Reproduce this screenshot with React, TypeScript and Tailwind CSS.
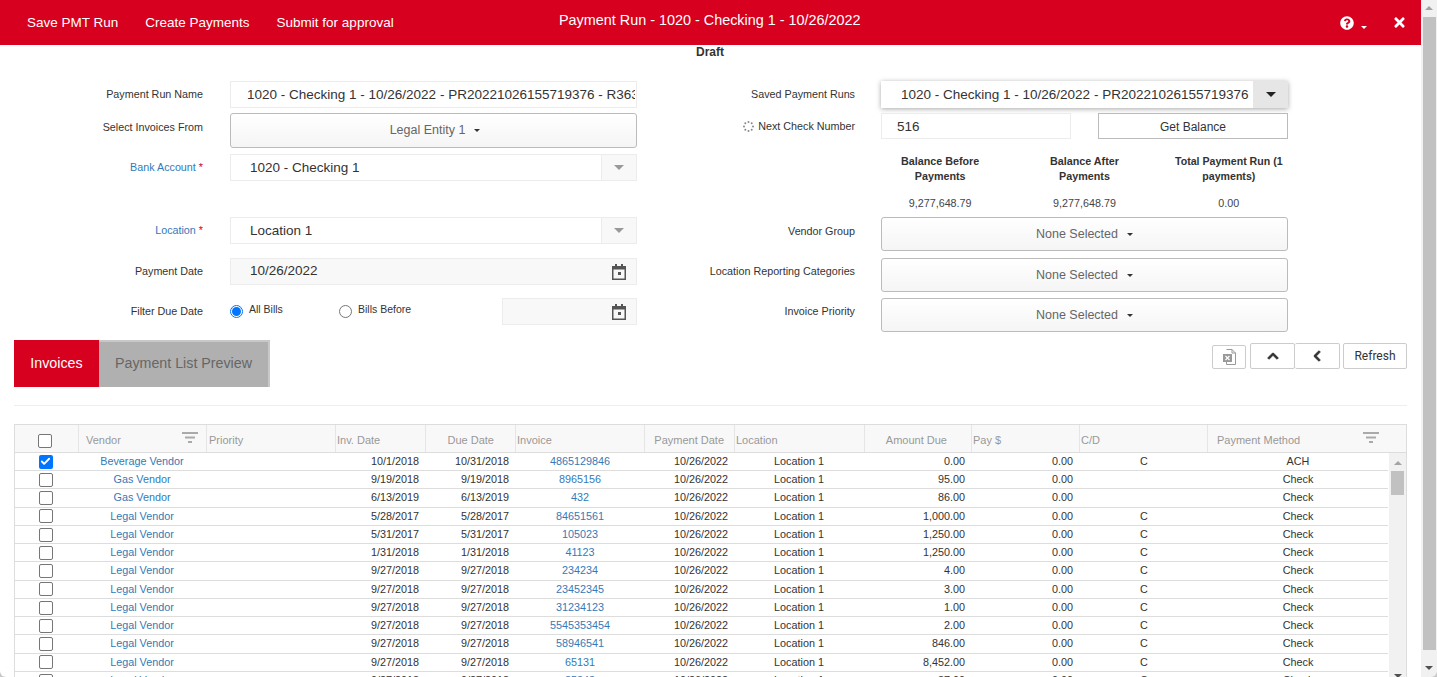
import React from 'react';
import { Check } from 'lucide-react';
import { FaChevronUp, FaChevronLeft, FaTimes, FaQuestionCircle } from 'react-icons/fa';

const rows = [
  ['Beverage Vendor', '10/1/2018', '10/31/2018', '4865129846', '0.00', 'C', 'ACH', true],
  ['Gas Vendor', '9/19/2018', '9/19/2018', '8965156', '95.00', '', 'Check'],
  ['Gas Vendor', '6/13/2019', '6/13/2019', '432', '86.00', '', 'Check'],
  ['Legal Vendor', '5/28/2017', '5/28/2017', '84651561', '1,000.00', 'C', 'Check'],
  ['Legal Vendor', '5/31/2017', '5/31/2017', '105023', '1,250.00', 'C', 'Check'],
  ['Legal Vendor', '1/31/2018', '1/31/2018', '41123', '1,250.00', 'C', 'Check'],
  ['Legal Vendor', '9/27/2018', '9/27/2018', '234234', '4.00', 'C', 'Check'],
  ['Legal Vendor', '9/27/2018', '9/27/2018', '23452345', '3.00', 'C', 'Check'],
  ['Legal Vendor', '9/27/2018', '9/27/2018', '31234123', '1.00', 'C', 'Check'],
  ['Legal Vendor', '9/27/2018', '9/27/2018', '5545353454', '2.00', 'C', 'Check'],
  ['Legal Vendor', '9/27/2018', '9/27/2018', '58946541', '846.00', 'C', 'Check'],
  ['Legal Vendor', '9/27/2018', '9/27/2018', '65131', '8,452.00', 'C', 'Check'],
  ['Legal Vendor', '9/27/2018', '9/27/2018', '85343', '87.00', 'C', 'Check'],
] as const;

const gridCols = 'grid grid-cols-[64px_128px_129px_90px_90px_129px_90px_130px_107px_108px_128px_181px]';

const Caret = ({ className = 'border-t-[#555]' }: { className?: string }) => (
  <span className={`inline-block w-0 h-0 border-x-[3px] border-x-transparent border-t-[3px] ${className}`} />
);

const BigCaret = () => (
  <span className="inline-block w-0 h-0 border-x-[5px] border-x-transparent border-t-[5px] border-t-[#999]" />
);

const FilterIcon = () => (
  <svg width="16" height="11" viewBox="0 0 16 11" fill="#aaa">
    <rect x="0" y="0" width="16" height="2" />
    <rect x="3" y="4.5" width="10" height="2" />
    <rect x="6" y="9" width="4" height="2" />
  </svg>
);

const CalIcon = () => (
  <svg width="14" height="16" viewBox="0 0 14 16" fill="#555">
    <path d="M3 0h2v2h4V0h2v2h3v14H0V2h3V0zM1.5 5.5v9h11v-9h-11zM6 8h3v3H6V8z" fillRule="evenodd" />
  </svg>
);

const ExcelIcon = () => (
  <svg width="13" height="16" viewBox="0 0 13 16">
    <path d="M3.5 0.5h5.5l3.5 3.5v11.5h-9v-3" fill="none" stroke="#999" />
    <path d="M9 0.5v3.5h3.5" fill="none" stroke="#999" />
    <rect x="0" y="5" width="9" height="8" fill="#999" />
    <path d="M2.5 7l4 4M6.5 7l-4 4" stroke="#fff" strokeWidth="1.2" />
  </svg>
);

const Label = ({ children, blue }: { children: React.ReactNode; blue?: boolean }) => (
  <div className={`text-right text-[10.75px] ${blue ? 'text-[#337ab7]' : 'text-[#333]'}`}>{children}</div>
);

const Combo = ({ value }: { value: string }) => (
  <div className="flex h-[27px] border border-[#ececec] bg-white">
    <div className="flex-1 pl-[19px] text-[13.5px] leading-[26px] text-[#333]">{value}</div>
    <div className="w-[35px] border-l border-[#ececec] bg-[#f8f8f8] flex items-center justify-center"><BigCaret /></div>
  </div>
);

const MultiSelect = ({ text, className }: { text: string; className: string }) => (
  <div className={`flex items-center justify-center gap-[9px] rounded-[3px] border border-[#bbb] bg-gradient-to-b from-white to-[#f5f5f5] text-[12.5px] text-[#666] ${className}`}>
    {text} <Caret className="border-t-[#333]" />
  </div>
);

const DateBox = ({ value, className }: { value?: string; className: string }) => (
  <div className={`flex h-[27px] items-center justify-between border border-[#ececec] bg-[#f8f8f8] pl-[19px] pr-[10px] text-[13.5px] text-[#333] ${className}`}>
    <span>{value}</span>
    <CalIcon />
  </div>
);

const Radio = ({ checked, label, className }: { checked?: boolean; label: string; className: string }) => (
  <div className={`flex items-center gap-[6px] ${className}`}>
    <span className={`flex h-[13px] w-[13px] items-center justify-center rounded-full border bg-white ${checked ? 'border-[#0075ff]' : 'border-[#767676]'}`}>
      {checked && <span className="h-[9px] w-[9px] rounded-full bg-[#0075ff]" />}
    </span>
    <span className="relative top-[-2px] text-[10.5px] text-[#333]">{label}</span>
  </div>
);

const Box = ({ checked }: { checked?: boolean }) =>
  checked ? (
    <span className="flex h-[14px] w-[14px] items-center justify-center rounded-[2px] bg-[#0075ff]">
      <Check size={11} strokeWidth={4} className="text-white" />
    </span>
  ) : (
    <span className="block h-[14px] w-[14px] rounded-[2px] border border-[#767676] bg-white" />
  );

const App = () => (
  <div className="flex h-[677px] w-[1437px] overflow-hidden bg-[#c8c8c8] font-['Liberation_Sans',sans-serif]">
    <div className="w-[1421px] shrink-0 overflow-hidden rounded-bl-[6px] bg-white">
      <header className="relative flex h-[45px] items-center bg-[#d7001e] text-[13.5px] text-white">
        <div className="flex gap-[27px] pl-[27px] pt-[1px]">
          <span>Save PMT Run</span>
          <span>Create Payments</span>
          <span>Submit for approval</span>
        </div>
        <div className="absolute left-[559px] top-[10px] text-[14.4px]">Payment Run - 1020 - Checking 1 - 10/26/2022</div>
        <div className="ml-auto flex items-center pr-[14px]">
          <FaQuestionCircle size={14} />
          <span className="ml-[7px] mr-[25px] mt-[5px]"><Caret className="border-t-white" /></span>
          <FaTimes size={15} />
        </div>
      </header>

      <div className="h-[15px] pl-[696px] text-[12px] font-bold leading-[15px] text-[#333]">Draft</div>

      <div className="flex pt-[21px]">
        {/* left side */}
        <div className="ml-[14px] w-[623px] grid grid-cols-[189px_407px] gap-x-[27px] content-start">
          <div className="h-[27px] flex items-center justify-end"><Label>Payment Run Name</Label></div>
          <div className="flex h-[27px] items-center overflow-hidden whitespace-nowrap border border-[#ececec] pl-[16px] pr-[1px] pt-[1px] text-[13.5px] text-[#333]">
            <span className="overflow-hidden">1020 - Checking 1 - 10/26/2022 - PR20221026155719376 - R3636</span>
          </div>
          <div className="mt-[5px] h-[35px] pt-[6px]"><Label>Select Invoices From</Label></div>
          <MultiSelect text="Legal Entity 1" className="mt-[5px] h-[35px] pl-[3px]" />
          <div className="mt-[6px] h-[27px] flex items-center justify-end"><Label blue>Bank Account <span className="text-[#d7001e]">*</span></Label></div>
          <div className="mt-[6px]"><Combo value="1020 - Checking 1" /></div>
          <div className="mt-[36px] h-[27px] flex items-center justify-end"><Label blue>Location <span className="text-[#d7001e]">*</span></Label></div>
          <div className="mt-[36px]"><Combo value="Location 1" /></div>
          <div className="mt-[14px] h-[27px] flex items-center justify-end"><Label>Payment Date</Label></div>
          <DateBox value="10/26/2022" className="mt-[14px]" />
          <div className="mt-[13px] h-[27px] flex items-center justify-end"><Label>Filter Due Date</Label></div>
          <div className="mt-[13px] flex items-center">
            <Radio checked label="All Bills" className="w-[109px]" />
            <Radio label="Bills Before" className="w-[163px]" />
            <DateBox className="w-[135px]" />
          </div>
        </div>

        {/* right side */}
        <div className="ml-[32px] grid w-[619px] grid-cols-[186px_407px] gap-x-[26px] content-start">
          <div className="h-[27px] flex items-center justify-end"><Label>Saved Payment Runs</Label></div>
          <div className="flex h-[27px] overflow-hidden bg-white shadow-[0_1px_5px_rgba(0,0,0,0.35)]">
            <div className="flex-1 overflow-hidden whitespace-nowrap pl-[20px] text-[13.5px] leading-[27px] text-[#333]">1020 - Checking 1 - 10/26/2022 - PR20221026155719376</div>
            <div className="flex w-[35px] items-center justify-center bg-[#e6e6e6]"><span className="inline-block h-0 w-0 border-x-[5px] border-t-[5px] border-x-transparent border-t-[#222]" /></div>
          </div>
          <div className="mt-[5px] h-[26px] pt-[1px] flex items-center justify-end gap-[4px]">
            <svg width="11" height="11" viewBox="0 0 11 11" fill="#888"><circle cx="5.5" cy="1" r="1" /><circle cx="8.7" cy="2.3" r="1" /><circle cx="10" cy="5.5" r="1" /><circle cx="8.7" cy="8.7" r="1" /><circle cx="5.5" cy="10" r="1" /><circle cx="2.3" cy="8.7" r="1" /><circle cx="1" cy="5.5" r="1" /><circle cx="2.3" cy="2.3" r="1" /></svg>
            <Label>Next Check Number</Label>
          </div>
          <div className="mt-[5px] flex gap-[27px]">
            <div className="h-[26px] w-[190px] border border-[#ececec] pl-[15px] text-[13.5px] leading-[25px] text-[#333]">516</div>
            <div className="flex h-[26px] w-[190px] items-center justify-center border border-[#bbb] pt-[1px] text-[12px] text-[#333]">Get Balance</div>
          </div>
          <div className="col-start-2 ml-[-13px] mt-[15px] grid h-[63px] w-[433px] grid-cols-3 grid-rows-[42px_auto] text-center text-[10.75px] leading-[15px] text-[#333]">
            <div className="font-bold">Balance Before<br />Payments</div>
            <div className="font-bold">Balance After<br />Payments</div>
            <div className="font-bold text-[10.6px]">Total Payment Run (1<br />payments)</div>
            <div className="text-[#444]">9,277,648.79</div>
            <div className="text-[#444]">9,277,648.79</div>
            <div className="text-[#444]">0.00</div>
          </div>
          <div className="h-[34px] pt-[6px]"><Label>Vendor Group</Label></div>
          <MultiSelect text="None Selected" className="h-[34px]" />
          <div className="mt-[7px] h-[34px] pt-[5px]"><Label>Location Reporting Categories</Label></div>
          <MultiSelect text="None Selected" className="mt-[7px] h-[34px]" />
          <div className="mt-[6px] h-[34px] pt-[5px]"><Label>Invoice Priority</Label></div>
          <MultiSelect text="None Selected" className="mt-[6px] h-[34px]" />
        </div>
      </div>

      {/* tabs and actions */}
      <div className="relative mx-[14px] mt-[8px] flex h-[47px] items-start">
        <div className="flex h-[47px] w-[85px] items-center justify-center bg-[#d7001e] text-[14.25px] text-white">Invoices</div>
        <div className="flex h-[47px] w-[171px] items-center justify-center border-t-2 border-r-2 border-[#c8c8c8] bg-[#b0b0b0] pb-[2px] text-[14.25px] text-[#666]">Payment List Preview</div>
        <div className="ml-auto mt-[3px] flex items-start">
          <div className="mr-[4px] mt-[2px] flex h-[24px] w-[34px] items-center justify-center rounded-[2px] border border-[#ccc]"><ExcelIcon /></div>
          <div className="flex h-[26px] w-[45px] items-center justify-center rounded-[2px] border border-[#ccc]"><FaChevronUp size={12} stroke="currentColor" strokeWidth={40} className="text-[#333]" /></div>
          <div className="flex h-[26px] w-[45px] items-center justify-center rounded-[2px] border border-l-0 border-[#ccc]"><FaChevronLeft size={12} stroke="currentColor" strokeWidth={40} className="text-[#333]" /></div>
          <div className="ml-[3px] flex h-[26px] w-[64px] items-center justify-center rounded-[2px] border border-[#ccc] font-['Roboto',sans-serif] text-[12px] text-[#333]">Refresh</div>
        </div>
      </div>

      <div className="mx-[14px] mt-[18px] border-t border-[#eee]" />

      {/* invoice grid */}
      <div className="relative mx-[14px] mt-[18px] h-[253px] overflow-hidden border-l border-r border-t border-[#ddd]">
        <div className={`${gridCols} h-[27.9px] items-center border-b border-[#ddd] bg-[#f8f8f8] pr-[18px] text-[11px] text-[#999] [&>div]:flex [&>div]:h-full [&>div]:items-center [&>div]:border-r [&>div]:border-[#e5e5e5] [&>div]:pt-[3px]`}>
          <div className="justify-center pr-[3px]"><span className="mt-[2px]"><Box /></span></div>
          <div className="justify-between pl-[7px] pr-[8px]"><span>Vendor</span><span className="mb-[4px]"><FilterIcon /></span></div>
          <div className="pl-[2px]">Priority</div>
          <div className="pl-[1px]">Inv. Date</div>
          <div className="justify-end pr-[21px]">Due Date</div>
          <div className="pl-[1px]">Invoice</div>
          <div className="justify-end pr-[10px]">Payment Date</div>
          <div className="pl-[1px]">Location</div>
          <div className="justify-end pr-[24px]">Amount Due</div>
          <div className="pl-[1px]">Pay $</div>
          <div className="pl-[1px]">C/D</div>
          <div className="justify-between pl-[9px] pr-[9px]"><span>Payment Method</span><span className="mb-[4px]"><FilterIcon /></span></div>
        </div>
        <div className="absolute right-0 top-0 h-[28px] w-[18px] border-b border-[#ddd] bg-[#f8f8f8]" />
        <div className="flex">
          <div className="w-[1373px] shrink-0">
            {rows.map((r, i) => (
              <div key={i} className={`${gridCols} h-[18.265px] items-center border-b border-[#ddd] text-[10.8px] leading-[17.265px] text-[#333]`}>
                <div className="flex justify-center pr-[3px]"><Box checked={Boolean(r[7])} /></div>
                <div className="pr-[2px] text-center text-[#337ab7]">{r[0]}</div>
                <div />
                <div className="pr-[7px] text-right">{r[1]}</div>
                <div className="pr-[7px] text-right">{r[2]}</div>
                <div className="pr-[1px] text-center text-[#337ab7]">{r[3]}</div>
                <div className="pr-[7px] text-right">10/26/2022</div>
                <div className="pr-[2px] text-center">Location 1</div>
                <div className="pr-[7px] text-right">{r[4]}</div>
                <div className="pr-[7px] text-right">0.00</div>
                <div className="text-center">{r[5]}</div>
                <div className="pr-[1px] text-center">{r[6]}</div>
              </div>
            ))}
          </div>
          <div className="ml-[1px] flex h-[225px] w-[17px] flex-col items-center bg-[#f1f1f1]">
            <span className="mt-[8px] inline-block h-0 w-0 border-x-[4px] border-b-[4px] border-x-transparent border-b-[#a3a3a3]" />
            <div className="mt-[6px] h-[26px] w-[13px] bg-[#c1c1c1]" />
            <span className="mt-[179px] inline-block h-0 w-0 border-x-[4px] border-t-[4px] border-x-transparent border-t-[#505050]" />
          </div>
        </div>
      </div>
    </div>

    {/* page scrollbar */}
    <div className="flex w-[16px] flex-col items-center rounded-br-[6px] bg-[#f1f1f1]">
      <span className="mt-[6px] inline-block h-0 w-0 border-x-[4px] border-b-[4px] border-x-transparent border-b-[#a3a3a3]" />
      <div className="mt-[7px] h-[633px] w-[13px] bg-[#c1c1c1]" />
      <span className="mt-[16px] inline-block h-0 w-0 border-x-[4px] border-t-[4px] border-x-transparent border-t-[#505050]" />
    </div>
  </div>
);

export default App;
